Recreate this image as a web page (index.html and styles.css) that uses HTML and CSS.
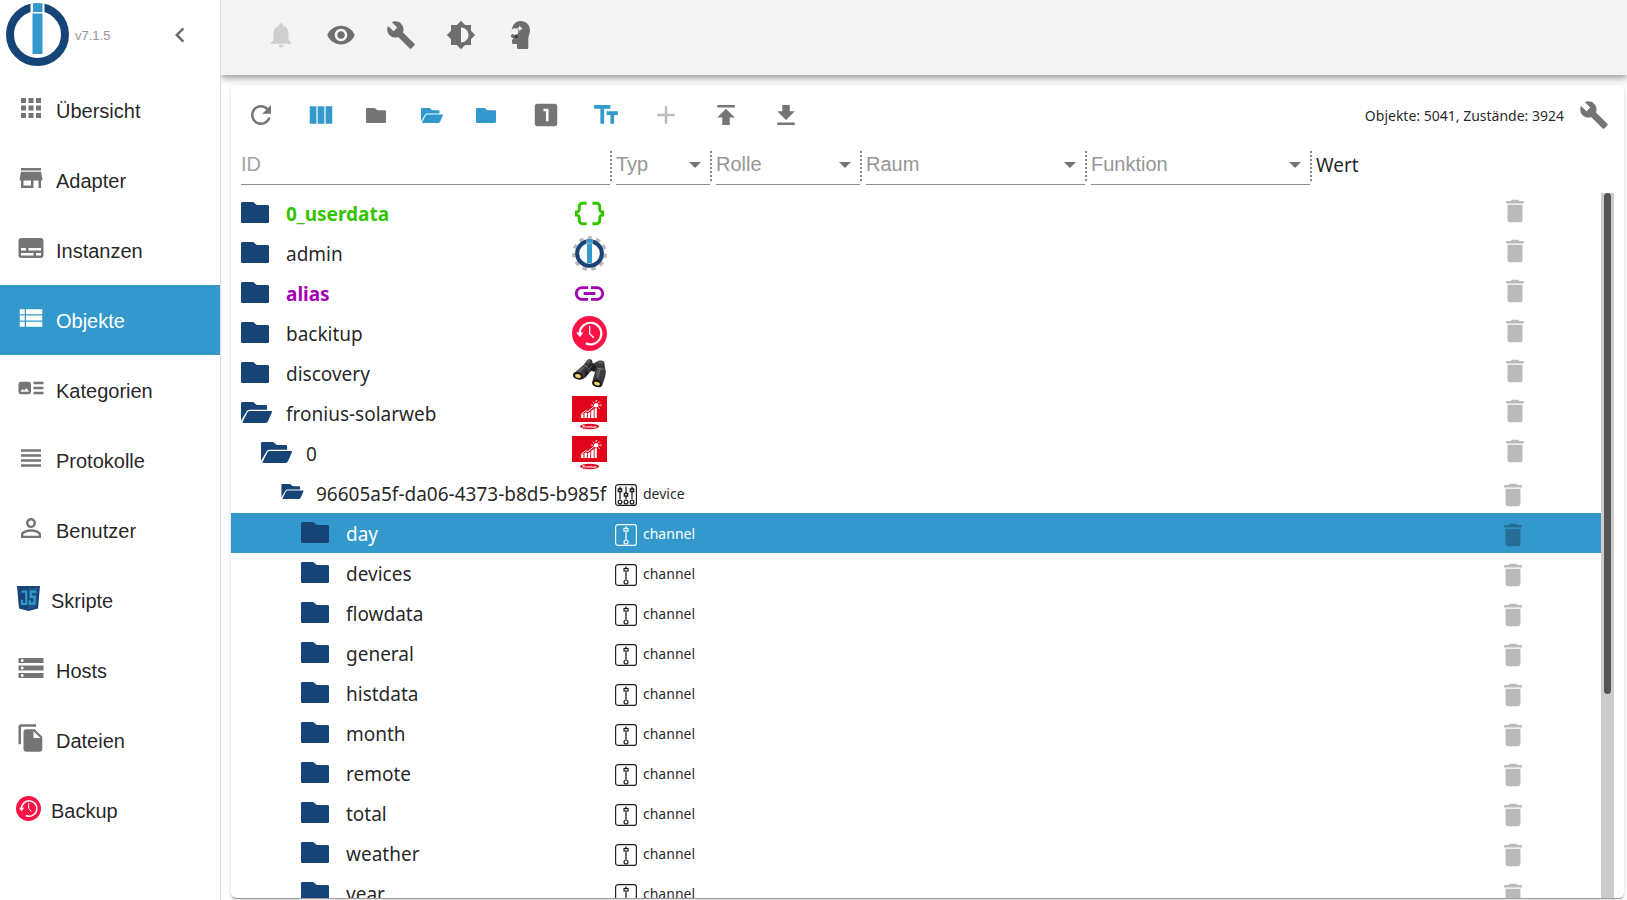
FILE: index.html
```html
<!DOCTYPE html>
<html lang="de">
<head>
<meta charset="utf-8">
<title>Objekte</title>
<link rel="stylesheet" href="styles.css">
</head>
<body>
<svg class="sprite" aria-hidden="true">
  <symbol id="folder" viewBox="0 0 28 21"><path d="M1.600 0H11.200c1 0 1.700.4 2.300 1.100l1 1c.6.6 1.200.9 2 .9H26.400C27.400 3 28 3.600 28 4.600V19.400c0 1-.6 1.600-1.600 1.600H1.600C.6 21 0 20.400 0 19.400V1.600C0 .6.6 0 1.600 0z"/></symbol>
  <symbol id="folder-open" viewBox="0 0 31 21"><path d="M1.600 0H11.200c1 0 1.700.4 2.300 1.100l1 1c.6.6 1.200.9 2 .9H24.600c.9 0 1.500.6 1.500 1.500V7.800H9.200C7.200 7.800 6 8.600 5.100 10.200L0 18.800V1.600C0 .6.6 0 1.600 0z"/><path d="M8.800 9H30.200c.8 0 1 .5.7 1.200L27.100 19c-.6 1.300-1.400 2-2.700 2H2.200c-.8 0-1-.4-.6-1.100L6.300 10.600C6.900 9.500 7.600 9 8.800 9z"/></symbol>
  <symbol id="delete" viewBox="0 0 24 24"><path d="M6 19c0 1.100.9 2 2 2h8c1.100 0 2-.9 2-2V7H6v12zM19 4h-3.500l-1-1h-5l-1 1H5v2h14V4z"/></symbol>
  <symbol id="build" viewBox="0 0 24 24"><path d="M22.700 19l-9.100-9.100c.9-2.300.4-5-1.500-6.900-2-2-5-2.400-7.400-1.300L9 6 6 9 1.600 4.700C.4 7.100.9 10.100 2.900 12.100c1.900 1.900 4.600 2.400 6.900 1.500l9.100 9.100c.4.4 1 .4 1.400 0l2.300-2.300c.5-.4.5-1.100.1-1.400z"/></symbol>
  <symbol id="channel" viewBox="0 0 22 22"><g fill="none" stroke="currentColor"><rect x=".6" y=".6" width="20.800" height="20.800" rx="2.500" stroke-width="1.200"/><path d="M11 2.500V5M11 8v7.500" stroke-width="1.300"/><rect x="9" y="4.500" width="4" height="2.500" stroke-width="1.200"/><circle cx="11" cy="18" r="2" stroke-width="1.200"/></g></symbol>
  <symbol id="device" viewBox="0 0 22 22"><g fill="none" stroke="currentColor" stroke-width="1.300"><rect x=".6" y=".6" width="20.800" height="20.800" rx="2.500" stroke-width="1.200"/><path d="M5 2.500v3M5 7.500V15M11 2.500V9M11 12v3M17 2.500v3M17 7.500V15"/><path d="M3.300 5h3.400v2.500H3.300zM9.300 9.500h3.400V12H9.300zM15.300 5h3.400v2.500h-3.400z"/><circle cx="5" cy="18" r="1.900"/><circle cx="11" cy="18" r="1.900"/><circle cx="17" cy="18" r="1.900"/></g></symbol>
  <symbol id="backup" viewBox="0 0 35 35"><circle cx="17.500" cy="17.500" r="17.500" fill="#ff1245"/><path d="M7.700 17.500A10.800 10.800 0 1 1 13.800 27.300" fill="none" stroke="#fff" stroke-width="2.200"/><path d="M4.200 16.500h7.200l-3.600 4.800z" fill="#fff"/><path d="M17.700 9.800v7.900l4 4" fill="none" stroke="#fff" stroke-width="1.300"/></symbol>
  <symbol id="fronius" viewBox="0 0 35 35"><path fill="#e2051b" d="M0 0h35v26H0z"/><ellipse cx="17.500" cy="30.500" rx="9.500" ry="2.700" fill="#e2051b"/><text x="17.500" y="31.800" text-anchor="middle" font-family="Liberation Sans, sans-serif" font-size="4" font-weight="700" font-style="italic" fill="#fff">Fronius</text><g fill="#fff"><circle cx="24.200" cy="9.200" r="2.300"/><path d="M9 19.500l2.500-2V22H9zM12.400 17l2.500-.5V22h-2.500zM15.800 17.500l2.500-2V22h-2.500zM19.200 15l2.500-2v9h-2.500zM22.600 12.500l2.200-.5v10h-2.200z"/></g><path d="M8.500 18.800l5-4 2.500.7 7-6M24.200 4v1.800M24.200 12.600v1.800M19.200 9.200H21M27.500 9.200h2M20.700 5.600l1.300 1.300M27.800 12.800l-1.300-1.300M27.800 5.600l-1.300 1.300" fill="none" stroke="#fff"/></symbol>
</svg>

<div class="app">
  <aside class="sidebar">
    <div class="brand">
      <svg class="logo" viewBox="0 0 63 63" role="img" aria-label="ioBroker"><circle cx="31.500" cy="31.500" r="27.500" fill="none" stroke="#164477" stroke-width="8"/><path fill="#fff" d="M24.500 0h14v10h-14z"/><path fill="#3399cc" d="M27 .3q4.500-.6 9.500 0V9H27zM26.500 10.500h10V51h-10z"/></svg>
      <span class="version">v7.1.5</span>
      <button class="collapse" aria-label="Menü einklappen"><svg class="icon" viewBox="0 0 24 24"><path d="M15.410 7.410L14 6l-6 6 6 6 1.410-1.410L10.830 12z"/></svg></button>
    </div>
    <nav class="nav">
      <a class="nav-item" href="#"><svg class="icon" viewBox="0 0 24 24"><path d="M4 8h4V4H4v4zm6 12h4v-4h-4v4zm-6 0h4v-4H4v4zm0-6h4v-4H4v4zm6 0h4v-4h-4v4zm6-10v4h4V4h-4zm-6 4h4V4h-4v4zm6 6h4v-4h-4v4zm0 6h4v-4h-4v4z"/></svg><span>Übersicht</span></a>
      <a class="nav-item" href="#"><svg class="icon" viewBox="0 0 24 24"><path d="M20 4H4v2h16V4zm1 10v-2l-1-5H4l-1 5v2h1v6h10v-6h4v6h2v-6h1zm-9 4H6v-4h6v4z"/></svg><span>Adapter</span></a>
      <a class="nav-item" href="#"><svg class="icon" viewBox="0 0 24 24"><path d="M20 4H4c-1.100 0-2 .9-2 2v12c0 1.100.9 2 2 2h16c1.100 0 2-.9 2-2V6c0-1.100-.9-2-2-2zM4 12h4v2H4v-2zm10 6H4v-2h10v2zm6 0h-4v-2h4v2zm0-4H10v-2h10v2z"/></svg><span>Instanzen</span></a>
      <a class="nav-item active" href="#" aria-current="page"><svg class="icon" viewBox="0 0 24 24"><path d="M3 14h4v-4H3v4zm0 5h4v-4H3v4zM3 9h4V5H3v4zm5 5h13v-4H8v4zm0 5h13v-4H8v4zM8 5v4h13V5H8z"/></svg><span>Objekte</span></a>
      <a class="nav-item" href="#"><svg class="icon" viewBox="0 0 24 24"><path d="M22 13h-8v-2h8v2zm0-6h-8v2h8V7zm-8 10h8v-2h-8v2zm-2-8v6c0 1.100-.9 2-2 2H4c-1.100 0-2-.9-2-2V9c0-1.100.9-2 2-2h6c1.100 0 2 .9 2 2zm-1.500 6l-2.250-3-1.750 2.260-1.250-1.510L3.500 15h7z"/></svg><span>Kategorien</span></a>
      <a class="nav-item" href="#"><svg class="icon" viewBox="0 0 24 24"><path d="M4 15h16v-2H4v2zm0 4h16v-2H4v2zm0-8h16V9H4v2zm0-6v2h16V5H4z"/></svg><span>Protokolle</span></a>
      <a class="nav-item" href="#"><svg class="icon" viewBox="0 0 24 24"><path d="M12 5.900c1.160 0 2.100.94 2.100 2.100s-.94 2.100-2.100 2.100S9.900 9.160 9.900 8s.94-2.100 2.100-2.100m0 9c2.970 0 6.100 1.460 6.100 2.100v1.100H5.900V17c0-.64 3.130-2.100 6.100-2.100M12 4C9.790 4 8 5.790 8 8s1.790 4 4 4 4-1.790 4-4-1.790-4-4-4zm0 9c-2.670 0-8 1.340-8 4v3h16v-3c0-2.660-5.330-4-8-4z"/></svg><span>Benutzer</span></a>
      <a class="nav-item" href="#"><svg class="icon small" viewBox="0 0 25 25"><path fill="#164477" d="M1 0h23l-2 22.500L12.500 25 3 22.500z"/><path fill="#1c5488" d="M12.500 2H22l-1.700 19-7.800 2.200z"/><path fill="none" stroke="#3399cc" stroke-width="2.200" d="M5.500 5.700h4.700V18H6v-4.200M20 5.700h-5.300v5.200h4.100l-.4 6.800h-4.700v-3.400"/></svg><span>Skripte</span></a>
      <a class="nav-item" href="#"><svg class="icon" viewBox="0 0 24 24"><path d="M2 20h20v-4H2v4zm2-3h2v2H4v-2zM2 4v4h20V4H2zm4 3H4V5h2v2zm-4 7h20v-4H2v4zm2-3h2v2H4v-2z"/></svg><span>Hosts</span></a>
      <a class="nav-item" href="#"><svg class="icon" viewBox="0 0 24 24"><path d="M16 1H4c-1.100 0-2 .9-2 2v14h2V3h12V1zm-1 4l6 6v10c0 1.100-.9 2-2 2H7.990C6.890 23 6 22.100 6 21l.01-14c0-1.100.89-2 1.990-2h7zm-1 7h5.500L14 6.500V12z"/></svg><span>Dateien</span></a>
      <a class="nav-item" href="#"><svg class="icon small"><use href="#backup"/></svg><span>Backup</span></a>
    </nav>
  </aside>

  <div class="main">
    <header class="appbar">
      <button class="tool" disabled aria-label="Benachrichtigungen"><svg class="icon" viewBox="0 0 24 24"><path d="M12 22c1.100 0 2-.9 2-2h-4c0 1.100.89 2 2 2zm6-6v-5c0-3.070-1.640-5.640-4.500-6.320V4c0-.83-.67-1.500-1.500-1.500s-1.500.67-1.500 1.500v.68C7.630 5.360 6 7.920 6 11v5l-2 2v1h16v-1l-2-2z"/></svg></button>
      <button class="tool" aria-label="Sichtbarkeit"><svg class="icon" viewBox="0 0 24 24"><path d="M12 4.500C7 4.500 2.730 7.610 1 12c1.730 4.390 6 7.500 11 7.500s9.270-3.110 11-7.500c-1.730-4.390-6-7.500-11-7.500zM12 17c-2.760 0-5-2.240-5-5s2.240-5 5-5 5 2.240 5 5-2.240 5-5 5zm0-8c-1.660 0-3 1.340-3 3s1.340 3 3 3 3-1.340 3-3-1.340-3-3-3z"/></svg></button>
      <button class="tool" aria-label="Systemeinstellungen"><svg class="icon"><use href="#build"/></svg></button>
      <button class="tool" aria-label="Farbschema"><svg class="icon" viewBox="0 0 24 24"><path d="M20 15.310L23.310 12 20 8.690V4h-4.690L12 .69 8.690 4H4v4.690L.69 12 4 15.310V20h4.690L12 23.310 15.310 20H20v-4.690zM12 18V6c3.310 0 6 2.690 6 6s-2.690 6-6 6z"/></svg></button>
      <button class="tool" aria-label="Expertenmodus"><svg class="icon" viewBox="0 0 30 30"><path d="M14.500 1C20 1 24 5.200 24 10.200c0 3.300-1.700 5.600-1.700 9V27.500c0 .9-.5 1.500-1.400 1.500H12.500c-.9 0-1.500-.6-1.500-1.500V24H7.500C6.600 24 6 23.400 6 22.500v-5L4.600 16.800 6 13.500C5 6 9 1 14.500 1z"/><circle cx="9" cy="11.500" r="3.300" fill="#f4f4f4"/><path fill="#f4f4f4" d="M13.800 5.500l1 1.900 1.900 1-1.900 1-1 1.900-1-1.900-1.900-1 1.900-1zM4.500 18h2.700v1.500H4.500z"/><circle cx="10.200" cy="16.500" r="1.500" fill="#333"/></svg></button>
    </header>

    <main class="card">
      <div class="toolbar">
        <button class="tool" aria-label="Aktualisieren"><svg class="icon" viewBox="0 0 24 24"><path d="M17.650 6.350C16.200 4.900 14.210 4 12 4c-4.420 0-7.990 3.580-7.990 8s3.570 8 7.990 8c3.730 0 6.840-2.550 7.730-6h-2.080c-.82 2.330-3.040 4-5.650 4-3.310 0-6-2.690-6-6s2.690-6 6-6c1.660 0 3.140.69 4.220 1.780L13 11h7V4l-2.350 2.350z"/></svg></button>
        <button class="tool on" aria-label="Spalten"><svg class="icon" viewBox="0 0 24 24"><path d="M14.670 5v14H9.330V5h5.340zm1 14H21V5h-5.330v14zm-7.340 0V5H3v14h5.330z"/></svg></button>
        <button class="tool folder-tool" aria-label="Alle zuklappen"><svg class="icon-folder"><use href="#folder"/></svg></button>
        <button class="tool folder-tool on" aria-label="Alle aufklappen"><svg class="icon-folder wide"><use href="#folder-open"/></svg></button>
        <button class="tool folder-tool on" aria-label="Eine Ebene zuklappen"><svg class="icon-folder"><use href="#folder"/></svg></button>
        <button class="tool" aria-label="Zustände"><svg class="icon" viewBox="0 0 24 24"><path d="M19 3H5c-1.100 0-2 .9-2 2v14c0 1.100.9 2 2 2h14c1.100 0 2-.9 2-2V5c0-1.100-.9-2-2-2zm-5 14h-2V9h-2V7h4v10z"/></svg></button>
        <button class="tool on" aria-label="Beschreibungen"><svg class="icon" viewBox="0 0 24 24"><path d="M2.500 4v3h5v12h3V7h5V4h-13zm19 5h-9v3h3v7h3v-7h3V9z"/></svg></button>
        <button class="tool" disabled aria-label="Hinzufügen"><svg class="icon" viewBox="0 0 24 24"><path d="M19 13h-6v6h-2v-6H5v-2h6V5h2v6h6v2z"/></svg></button>
        <button class="tool" aria-label="Hochladen"><svg class="icon" viewBox="0 0 24 24"><path d="M5 4v2h14V4H5zm0 10h4v6h6v-6h4l-7-7-7 7z"/></svg></button>
        <button class="tool" aria-label="Herunterladen"><svg class="icon" viewBox="0 0 24 24"><path d="M19 9h-4V4H9v5H5l7 7 7-7zM5 18v2h14v-2H5z"/></svg></button>
        <span class="counts">Objekte: 5041, Zustände: 3924</span>
        <button class="tool" aria-label="Bearbeiten"><svg class="icon"><use href="#build"/></svg></button>
      </div>

      <div class="filters">
        <div class="filter c-id"><input class="field" type="text" placeholder="ID" aria-label="ID"><i class="handle"></i></div>
        <div class="filter c-type"><span class="select"><select class="field" aria-label="Typ"><option>Typ</option></select></span><i class="handle"></i></div>
        <div class="filter c-role"><span class="select"><select class="field" aria-label="Rolle"><option>Rolle</option></select></span><i class="handle"></i></div>
        <div class="filter c-room"><span class="select"><select class="field" aria-label="Raum"><option>Raum</option></select></span><i class="handle"></i></div>
        <div class="filter c-room"><span class="select"><select class="field" aria-label="Funktion"><option>Funktion</option></select></span><i class="handle"></i></div>
        <div class="value-head">Wert</div>
      </div>

      <div class="list">
        <table class="tree">
          <colgroup><col class="c-id"><col class="c-type"><col></colgroup>
          <tbody>
            <tr class="l0 user"><td><div class="id"><svg class="fold"><use href="#folder"/></svg><span class="name">0_userdata</span><svg class="adapter" viewBox="0 0 24 24"><path d="M4 7v2c0 .55-.45 1-1 1H2v4h1c.55 0 1 .45 1 1v2c0 1.650 1.350 3 3 3h3v-2H7c-.55 0-1-.45-1-1v-2c0-1.300-.84-2.420-2-2.830v-.34C5.160 11.420 6 10.300 6 9V7c0-.55.45-1 1-1h3V4H7C5.350 4 4 5.350 4 7zM21 10c-.55 0-1-.45-1-1V7c0-1.650-1.350-3-3-3h-3v2h3c.55 0 1 .45 1 1v2c0 1.300.84 2.420 2 2.830v.34c-1.160.41-2 1.520-2 2.830v2c0 .55-.45 1-1 1h-3v2h3c1.650 0 3-1.350 3-3v-2c0-.55.45-1 1-1h1v-4h-1z"/></svg></div></td><td></td><td><button class="del" aria-label="Löschen"><svg><use href="#delete"/></svg></button></td></tr>
            <tr class="l0"><td><div class="id"><svg class="fold"><use href="#folder"/></svg><span class="name">admin</span><svg class="adapter" viewBox="0 0 35 35"><circle cx="17.500" cy="17.500" r="15.800" fill="none" stroke="#b8b8b8" stroke-width="3.200" stroke-dasharray="4.500 4.525" stroke-dashoffset="2.250" transform="rotate(-90 17.500 17.500)"/><circle cx="17.500" cy="17.500" r="14.500" fill="#c4c4c4"/><circle cx="17.500" cy="17.500" r="12.300" fill="#fff" stroke="#164477" stroke-width="4"/><path fill="#c4c4c4" d="M14.400 2.800h6.200V8h-6.200z"/><path fill="#3399cc" d="M15 3h5v3.800h-5zM15 7.600h5V27h-5z"/></svg></div></td><td></td><td><button class="del" aria-label="Löschen"><svg><use href="#delete"/></svg></button></td></tr>
            <tr class="l0 alias"><td><div class="id"><svg class="fold"><use href="#folder"/></svg><span class="name">alias</span><svg class="adapter" viewBox="0 0 24 24"><path d="M3.900 12c0-1.710 1.390-3.100 3.100-3.100h4V7H7c-2.760 0-5 2.240-5 5s2.240 5 5 5h4v-1.900H7c-1.710 0-3.100-1.390-3.100-3.100zM8 13h8v-2H8v2zm9-6h-4v1.900h4c1.710 0 3.100 1.390 3.100 3.100s-1.390 3.100-3.100 3.100h-4V17h4c2.760 0 5-2.240 5-5s-2.240-5-5-5z"/></svg></div></td><td></td><td><button class="del" aria-label="Löschen"><svg><use href="#delete"/></svg></button></td></tr>
            <tr class="l0"><td><div class="id"><svg class="fold"><use href="#folder"/></svg><span class="name">backitup</span><svg class="adapter"><use href="#backup"/></svg></div></td><td></td><td><button class="del" aria-label="Löschen"><svg><use href="#delete"/></svg></button></td></tr>
            <tr class="l0"><td><div class="id"><svg class="fold"><use href="#folder"/></svg><span class="name">discovery</span><svg class="adapter" viewBox="0 0 35 35"><path fill="#3b393b" d="M12 8.500l3-4c.8-1.500 4.500-2 5.200.3l.6 2.700 4.200-1.800c.8-1.800 6.500-1.600 7.200.3.6 1.500.3 4.500 1.200 7.500 1.400 4-1 10-3.400 16.500-1.500 2.200-7.500 1.400-9.500-1.500l.3-5 2.200-7.500-3.500-1-2.800 2.200-4.700 5.300c-2 2-8 1.300-10.700-1.500-.5-1-.3-2.500.7-3.700z"/><path fill="#605c5f" d="M3 17.500l7.500-6.800 2.500 1-7.500 7zM24 16l3-3.500 2 .8-3 11zM14 5.500l2.500-2 2 1.500-3 3zM25.500 6c1.500-1 4.500-.8 5.500.3l-.3 1.500-5-.5z"/><path fill="#1c1b1c" d="M16 10l4-2 4.500 2.500-1.500 4.500-4.500-1zM13 14l4 3-4 5z"/><path fill="none" stroke="#8a8789" stroke-width=".8" d="M12 9.500l4 1.500M25 12l7 1.500M17 13l3-3.500"/><ellipse cx="6" cy="19.500" rx="5" ry="3.500" transform="rotate(20 6 19.500)" fill="#191819"/><ellipse cx="25" cy="27.300" rx="5" ry="3.500" transform="rotate(18 25 27.300)" fill="#191819"/><ellipse cx="6" cy="20" rx="3" ry="1.800" transform="rotate(20 6 20)" fill="#f1d55f"/><ellipse cx="25" cy="27.600" rx="3" ry="1.700" transform="rotate(18 25 27.600)" fill="#f1d55f"/></svg></div></td><td></td><td><button class="del" aria-label="Löschen"><svg><use href="#delete"/></svg></button></td></tr>
            <tr class="l0"><td><div class="id"><svg class="fold open"><use href="#folder-open"/></svg><span class="name">fronius-solarweb</span><svg class="adapter"><use href="#fronius"/></svg></div></td><td></td><td><button class="del" aria-label="Löschen"><svg><use href="#delete"/></svg></button></td></tr>
            <tr class="l1"><td><div class="id"><svg class="fold open"><use href="#folder-open"/></svg><span class="name">0</span><svg class="adapter"><use href="#fronius"/></svg></div></td><td></td><td><button class="del" aria-label="Löschen"><svg><use href="#delete"/></svg></button></td></tr>
            <tr class="l2 typed"><td><div class="id"><svg class="fold compact"><use href="#folder-open"/></svg><span class="name">96605a5f-da06-4373-b8d5-b985f</span></div></td><td><div class="type"><svg><use href="#device"/></svg>device</div></td><td><button class="del" aria-label="Löschen"><svg><use href="#delete"/></svg></button></td></tr>
            <tr class="l3 typed selected"><td><div class="id"><svg class="fold"><use href="#folder"/></svg><span class="name">day</span></div></td><td><div class="type"><svg><use href="#channel"/></svg>channel</div></td><td><button class="del" aria-label="Löschen"><svg><use href="#delete"/></svg></button></td></tr>
            <tr class="l3 typed"><td><div class="id"><svg class="fold"><use href="#folder"/></svg><span class="name">devices</span></div></td><td><div class="type"><svg><use href="#channel"/></svg>channel</div></td><td><button class="del" aria-label="Löschen"><svg><use href="#delete"/></svg></button></td></tr>
            <tr class="l3 typed"><td><div class="id"><svg class="fold"><use href="#folder"/></svg><span class="name">flowdata</span></div></td><td><div class="type"><svg><use href="#channel"/></svg>channel</div></td><td><button class="del" aria-label="Löschen"><svg><use href="#delete"/></svg></button></td></tr>
            <tr class="l3 typed"><td><div class="id"><svg class="fold"><use href="#folder"/></svg><span class="name">general</span></div></td><td><div class="type"><svg><use href="#channel"/></svg>channel</div></td><td><button class="del" aria-label="Löschen"><svg><use href="#delete"/></svg></button></td></tr>
            <tr class="l3 typed"><td><div class="id"><svg class="fold"><use href="#folder"/></svg><span class="name">histdata</span></div></td><td><div class="type"><svg><use href="#channel"/></svg>channel</div></td><td><button class="del" aria-label="Löschen"><svg><use href="#delete"/></svg></button></td></tr>
            <tr class="l3 typed"><td><div class="id"><svg class="fold"><use href="#folder"/></svg><span class="name">month</span></div></td><td><div class="type"><svg><use href="#channel"/></svg>channel</div></td><td><button class="del" aria-label="Löschen"><svg><use href="#delete"/></svg></button></td></tr>
            <tr class="l3 typed"><td><div class="id"><svg class="fold"><use href="#folder"/></svg><span class="name">remote</span></div></td><td><div class="type"><svg><use href="#channel"/></svg>channel</div></td><td><button class="del" aria-label="Löschen"><svg><use href="#delete"/></svg></button></td></tr>
            <tr class="l3 typed"><td><div class="id"><svg class="fold"><use href="#folder"/></svg><span class="name">total</span></div></td><td><div class="type"><svg><use href="#channel"/></svg>channel</div></td><td><button class="del" aria-label="Löschen"><svg><use href="#delete"/></svg></button></td></tr>
            <tr class="l3 typed"><td><div class="id"><svg class="fold"><use href="#folder"/></svg><span class="name">weather</span></div></td><td><div class="type"><svg><use href="#channel"/></svg>channel</div></td><td><button class="del" aria-label="Löschen"><svg><use href="#delete"/></svg></button></td></tr>
            <tr class="l3 typed"><td><div class="id"><svg class="fold"><use href="#folder"/></svg><span class="name">year</span></div></td><td><div class="type"><svg><use href="#channel"/></svg>channel</div></td><td><button class="del" aria-label="Löschen"><svg><use href="#delete"/></svg></button></td></tr>
          </tbody>
        </table>
        <div class="scroll-track"><div class="scroll-thumb"></div></div>
      </div>
    </main>
  </div>
</div>
</body>
</html>
```
FILE: styles.css
```css
* { box-sizing: border-box; }
:root {
  --blue: #3399cc;
  --navy: #164477;
  --text: rgba(0, 0, 0, .87);
  --icon: #757575;
  --ui: "Noto Sans", "Open Sans", sans-serif;
  --sans: "Liberation Sans", Arial, sans-serif;
}
body { margin: 0; font-family: var(--ui); color: var(--text); background: #fff; }
button { padding: 0; border: 0; background: none; color: inherit; font: inherit; cursor: pointer; }
svg { display: block; flex: none; fill: currentColor; }
.sprite { position: absolute; width: 0; height: 0; }
.icon { width: 30px; height: 30px; }

.app { display: flex; height: 100vh; overflow: hidden; }

.sidebar { flex: none; width: 221px; border-right: 1px solid #dcdcdc; font-family: var(--sans); }
.brand { display: flex; align-items: center; height: 75px; padding: 0 25px 5px 6px; }
.logo { width: 63px; height: 63px; margin-bottom: 1px; }
.version { margin-left: 6px; font-size: 13px; color: #969696; }
.collapse { margin-left: auto; color: #6c6c6c; }

.nav-item { display: flex; align-items: center; gap: 10px; height: 70px; padding: 0 16px; font-size: 20px; line-height: 30px; color: var(--text); text-decoration: none; }
.nav-item .icon { margin-bottom: 4px; color: var(--icon); }
.nav-item .small { width: 25px; height: 25px; }
.nav-item span { padding-top: 2px; }
.nav-item.active, .nav-item.active .icon { color: #fff; }
.nav-item.active { background: var(--blue); }

.main { display: flex; flex: 1; flex-direction: column; min-width: 0; }
.appbar { z-index: 1; display: flex; flex: none; height: 75px; padding: 0 30px 5px; background: #f4f4f4; box-shadow: 0 2px 5px -1px rgba(0, 0, 0, .25), 0 5px 6px rgba(0, 0, 0, .16), 0 1px 12px rgba(0, 0, 0, .12); clip-path: inset(0 0 -20px 0); }
.tool { display: flex; flex: none; align-items: center; justify-content: center; width: 60px; color: var(--icon); }
.appbar .tool { color: #6e6e6e; }
.tool.on { color: var(--blue); }
.tool:disabled { color: #bbb; }
.appbar .tool:disabled { color: #cecece; }

.card { display: flex; flex: 1; flex-direction: column; min-height: 0; margin: 10px 3px 2px 10px; border-radius: 5px; background: #fff; box-shadow: 0 2px 1px -1px rgba(0, 0, 0, .25), 0 1px 1px rgba(0, 0, 0, .16), 0 1px 4px rgba(0, 0, 0, .14); overflow: hidden; }
.toolbar { display: flex; flex: none; height: 60px; }
.folder-tool { width: 50px; margin-right: 5px; }
.icon-folder { width: 20px; height: 15px; }
.icon-folder.wide { width: 22px; margin-left: 2px; }
.counts { margin-left: auto; align-self: center; padding-top: 2px; font-size: 14px; line-height: 20px; }

.c-id { width: 380px; }
.c-type { width: 100px; }
.c-role { width: 150px; }
.c-room { width: 225px; }
.filters { display: flex; flex: none; height: 48px; padding-top: 6px; }
.filter { display: flex; flex: none; height: 34px; padding-left: 5px; }
.filter.c-id { padding-left: 10px; }
.handle { flex: none; width: 2px; height: 30px; margin-right: -1px; border-right: 2px dotted #858585; }
.field { flex: 1; width: 100%; min-width: 0; height: 34px; margin: 0; padding: 0 0 8px; border: 0; border-bottom: 1px solid #8d8d8d; border-radius: 0; outline: 0; background: none; appearance: none; font: 20px var(--sans); color: #969696; }
.field::placeholder { color: #a2a2a2; }
input.field { padding-bottom: 6px; }
.select { position: relative; display: flex; flex: 1; min-width: 0; }
.select::after { content: ""; position: absolute; right: 9px; top: 11px; border: 6px solid transparent; border-top-color: var(--icon); border-bottom: 0; pointer-events: none; }
.value-head { padding-left: 5px; font-size: 19px; line-height: 28px; }

.list { display: flex; flex: 1; min-height: 0; padding-right: 10px; overflow: hidden; }
.tree { flex: 1 1 0; width: 100%; min-width: 0; height: max-content; border-collapse: collapse; table-layout: fixed; }
.tree td { height: 40px; padding: 0; }
.id { display: flex; align-items: center; height: 40px; padding: 0 4px 0 10px; }
.l1 .id { padding-left: 30px; }
.l2 .id { padding-left: 50px; }
.l3 .id { padding-left: 70px; }
.fold { width: 28px; height: 21px; margin: 0 17px 1px 0; color: var(--navy); }
.fold.open { width: 31px; margin-right: 14px; }
.fold.compact { width: 23px; height: 15px; margin: 0 12px 3px 0; }
.name { flex: 1; min-width: 0; padding-top: 2px; overflow: hidden; font-size: 19px; line-height: 30px; white-space: nowrap; }
.adapter { width: 35px; height: 35px; }
.user .name, .user .adapter { font-weight: 700; color: #33c400; }
.alias .name, .alias .adapter { font-weight: 700; color: #a300b5; }
.type { display: flex; align-items: center; gap: 6px; padding: 2px 0 0 4px; font-size: 14px; line-height: 20px; }
.type svg { width: 22px; height: 22px; margin-top: 1px; }
.del { display: block; margin: 0 71px 4px auto; color: rgba(0, 0, 0, .27); }
.del svg { width: 30px; height: 30px; }
.typed .del { margin: 4px 73px 0 auto; }
.selected { background: var(--blue); color: #fff; }
.scroll-track { flex: none; width: 13px; padding: 0 3px; background: #ccc; }
.scroll-thumb { height: 71%; border-radius: 4px; background: #555; }
```
